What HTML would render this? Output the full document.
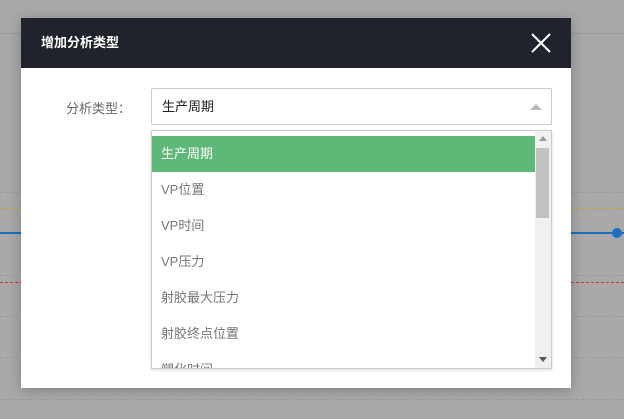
<!DOCTYPE html>
<html><head><meta charset="utf-8"><style>
*{margin:0;padding:0;box-sizing:border-box}
body{width:624px;height:419px;background:#a9a9a9;position:relative;overflow:hidden;font-family:"Liberation Sans","Noto Sans CJK SC",sans-serif}
.l{position:absolute;left:0;width:624px;height:0}
.dlg{position:absolute;left:21px;top:18px;width:550px;height:370px;background:#fff;box-shadow:0 2px 12px rgba(0,0,0,.25)}
.hd{height:50px;background:#20232b;color:#fff;font-size:13px;font-weight:bold;line-height:50px;padding-left:20px;position:relative}
.lab{position:absolute;left:45px;top:80px;font-size:13px;color:#666}
.sel{position:absolute;left:130px;top:70px;width:401px;height:37px;border:1px solid #ccc;border-radius:2px;font-size:13px;line-height:35px;padding-left:10px;color:#222}
.arr{position:absolute;right:9px;top:15px;width:0;height:0;border-left:6px solid transparent;border-right:6px solid transparent;border-bottom:6px solid #bbb}
.dd{position:absolute;left:130px;top:112px;width:401px;height:239px;border:1px solid #ccc;background:#fff;overflow:hidden;box-shadow:0 1px 3px rgba(0,0,0,.15)}
.it{position:absolute;left:0;width:383px;height:36px;line-height:36px;padding-left:9px;font-size:13px;color:#777}
.sb{position:absolute;left:383px;top:0;width:17px;height:239px;background:#f0f0f0}
</style></head><body>
<div class="l" style="top:33px;border-top:1px solid #999"></div>
<div class="l" style="top:192px;border-top:1px dashed #999"></div>
<div class="l" style="top:208px;border-top:1px dashed #c8a040"></div>
<div class="l" style="top:232px;border-top:2px solid #1a6fc0"></div>
<div style="position:absolute;left:612px;top:228px;width:10px;height:10px;border-radius:50%;background:#1a6fc0"></div>
<div class="l" style="top:275px;border-top:1px dashed #999"></div>
<div class="l" style="top:282px;border-top:1px dashed #d03030"></div>
<div class="l" style="top:316px;border-top:1px dashed #999"></div>
<div class="l" style="top:357px;border-top:1px dashed #999"></div>
<div class="l" style="top:399px;border-top:1px dashed #999"></div>
<div class="dlg">
<div class="hd">增加分析类型
<svg style="position:absolute;right:20px;top:15px" width="20" height="20" viewBox="0 0 20 20"><path d="M1 1L19 19M19 1L1 19" stroke="#fff" stroke-width="2"/></svg></div>
<div class="lab">分析类型：</div>
<div class="sel">生产周期<div class="arr"></div></div>
<div class="dd">
<div class="it" style="top:5px;background:#5eb878;color:#fff">生产周期</div>
<div class="it" style="top:41px">VP位置</div>
<div class="it" style="top:77px">VP时间</div>
<div class="it" style="top:113px">VP压力</div>
<div class="it" style="top:149px">射胶最大压力</div>
<div class="it" style="top:185px">射胶终点位置</div>
<div class="it" style="top:221px">塑化时间</div>
<div class="sb">
<div style="position:absolute;left:4px;top:5px;border-left:4px solid transparent;border-right:4px solid transparent;border-bottom:5px solid #999"></div>
<div style="position:absolute;left:1px;top:17px;width:13px;height:70px;background:#c1c1c1"></div>
<div style="position:absolute;left:4px;top:226px;border-left:4px solid transparent;border-right:4px solid transparent;border-top:5px solid #555"></div>
</div>
</div>
</div>
</body></html>
